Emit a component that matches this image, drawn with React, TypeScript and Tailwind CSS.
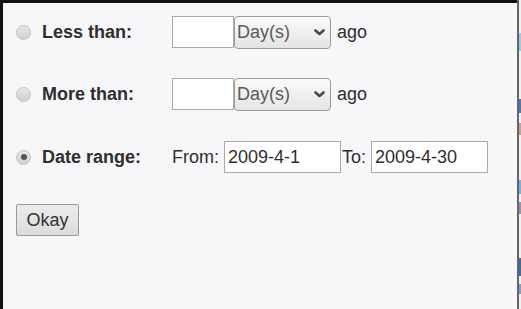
function Radio({ checked }: { checked?: boolean }) {
  return (
    <span className="flex h-[15px] w-[15px] shrink-0 items-center justify-center rounded-full border border-[#c4c4c4] bg-gradient-to-b from-[#e6e6e6] to-[#d0d0d0]">
      {checked && <span className="h-[6px] w-[6px] rounded-full bg-[#555]" />}
    </span>
  );
}

function DaySelect() {
  return (
    <div className="flex h-[33px] w-[97px] items-center justify-between rounded-[4px] border border-[#9a9a9a] bg-gradient-to-b from-[#fbfbfb] to-[#e4e4e4] pl-[2px] pr-[5px] text-[18px] text-[#5a5a5a]">
      <span>Day(s)</span>
      <svg width="11" height="7" viewBox="0 0 11 7" className="mt-[1px]">
        <path d="M1.5 1.5 L5.5 5 L9.5 1.5" fill="none" stroke="#4a4a4a" strokeWidth="2.6" strokeLinejoin="round" strokeLinecap="round" />
      </svg>
    </div>
  );
}

function AgoRow({ label }: { label: string }) {
  return (
    <div className="flex h-[32px] items-center">
      <div className="flex w-[169px] items-center gap-[11px] pl-[13px]">
        <Radio />
        <span className="font-bold">{label}</span>
      </div>
      <div className="h-[32px] w-[62px] border border-[#aaa] bg-white" />
      <DaySelect />
      <span className="ml-[6px]">ago</span>
    </div>
  );
}

export default function App() {
  return (
    <div className="flex h-[309px] w-[521px] bg-[#f7f7f9] font-['Liberation_Sans',Arial,sans-serif] text-[18px] text-[#2e2e2e]">
      <div className="flex h-full w-[517px] flex-col border-l-[3px] border-t-[3px] border-[#111] pt-[13px]">
        <AgoRow label="Less than:" />
        <div className="mt-[30px]">
          <AgoRow label="More than:" />
        </div>
        <div className="mt-[31px] flex h-[32px] items-center">
          <div className="flex w-[169px] items-center gap-[11px] pl-[13px]">
            <Radio checked />
            <span className="font-bold">Date range:</span>
          </div>
          <span>From:</span>
          <div className="ml-[5px] flex h-[32px] w-[117px] items-center border border-[#aaa] bg-white pl-[3px]">2009-4-1</div>
          <span className="ml-[1px]">To:</span>
          <div className="ml-[5px] flex h-[32px] w-[117px] items-center border border-[#aaa] bg-white pl-[3px]">2009-4-30</div>
        </div>
        <div className="mt-[31px] pl-[13px]">
          <button className="h-[32px] w-[63px] rounded-[2px] border border-[#999] bg-gradient-to-b from-[#ececec] to-[#dcdcdc] text-[18px] text-[#333]">
            Okay
          </button>
        </div>
      </div>
      <div className="h-full w-[2px] bg-[#666]" />
      <div className="flex h-full w-[2px] flex-col bg-[#f0f0f0]">
        <div className="mt-[33px] h-[18px] bg-[#8fd0e8]" />
        <div className="mt-[48px] h-[14px] bg-[#3a7fc0]" />
        <div className="mt-[10px] h-[12px] bg-[#c9a090]" />
        <div className="mt-[45px] h-[14px] bg-[#6cb8dc]" />
        <div className="mt-[8px] h-[12px] bg-[#9a90a8]" />
        <div className="mt-[44px] h-[18px] bg-[#2f6fb8]" />
        <div className="mt-[8px] h-[10px] bg-[#7aa0c8]" />
      </div>
    </div>
  );
}
